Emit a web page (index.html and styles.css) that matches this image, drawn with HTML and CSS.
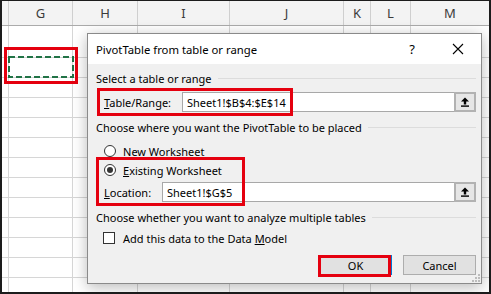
FILE: index.html
```html
<!DOCTYPE html>
<html>
<head>
<meta charset="utf-8">
<link rel="stylesheet" href="styles.css">
</head>
<body>
<div class="screen">
  <div class="canvas">
    <div class="sheet">
      <div class="hdr">
        <div class="col c0"></div>
        <div class="col cg">G</div>
        <div class="col ch">H</div>
        <div class="col ci">I</div>
        <div class="col cj">J</div>
        <div class="col ck">K</div>
        <div class="col cl">L</div>
        <div class="col cm">M</div>
      </div>
      <div class="grid">
        <div class="col c0"></div>
        <div class="col cg"></div>
        <div class="col ch"></div>
        <div class="col ci"></div>
        <div class="col cj"></div>
        <div class="col ck"></div>
        <div class="col cl"></div>
        <div class="col cm"></div>
      </div>
    </div>

    <svg class="ants" width="66" height="22" viewBox="0 0 66 22"><rect x="1" y="1" width="64" height="20" fill="none" stroke="#217346" stroke-width="2" stroke-dasharray="6 3"/></svg>
    <div class="mark mark-cell"></div>

    <div class="dialog">
      <div class="titlebar">
        <span class="title">PivotTable from table or range</span>
        <span class="tbtn help">?</span>
        <span class="tbtn close"><svg width="12" height="12" viewBox="0 0 12 12"><path d="M1 1L11 11M11 1L1 11" stroke="#000" stroke-width="1.1" fill="none"/></svg></span>
      </div>
      <div class="body">
        <div class="section"><span>Select a table or range</span><i class="rule"></i></div>
        <div class="field-row">
          <span class="label lab-range"><u>T</u>able/Range:</span>
          <span class="input">Sheet1!$B$4:$E$14</span>
          <span class="pick"><svg width="10" height="10" viewBox="0 0 10 10"><path d="M5 0.5L1 4.5H3.8V7.5H6.2V4.5H9Z" fill="#000"/><rect x="1" y="8.4" width="8" height="1.4" fill="#000"/></svg></span>
        </div>
        <div class="section s2"><span>Choose where you want the PivotTable to be placed</span><i class="rule"></i></div>
        <div class="opt r1"><span class="radio"></span><span><u>N</u>ew Worksheet</span></div>
        <div class="opt r2"><span class="radio on"></span><span><u>E</u>xisting Worksheet</span></div>
        <div class="field-row loc">
          <span class="label lab-loc"><u>L</u>ocation:</span>
          <span class="input">Sheet1!$G$5</span>
          <span class="pick"><svg width="10" height="10" viewBox="0 0 10 10"><path d="M5 0.5L1 4.5H3.8V7.5H6.2V4.5H9Z" fill="#000"/><rect x="1" y="8.4" width="8" height="1.4" fill="#000"/></svg></span>
        </div>
        <div class="section s3"><span>Choose whether you want to analyze multiple tables</span><i class="rule"></i></div>
        <div class="opt chk"><span class="checkbox"></span><span>Add this data to the Data <u>M</u>odel</span></div>
        <div class="buttons">
          <span class="btn ok">OK</span>
          <span class="btn">Cancel</span>
        </div>
      </div>
      <svg class="grip" width="8" height="8" viewBox="0 0 8 8"><g fill="#bcbcbc"><rect x="6" y="0" width="2" height="2"/><rect x="3" y="3" width="2" height="2"/><rect x="6" y="3" width="2" height="2"/><rect x="0" y="6" width="2" height="2"/><rect x="3" y="6" width="2" height="2"/><rect x="6" y="6" width="2" height="2"/></g></svg>
    </div>

    <div class="mark mark-range"></div>
    <div class="mark mark-loc"></div>
    <div class="mark mark-ok"></div>
  </div>
</div>
</body>
</html>
```
FILE: styles.css
```css
html, body {
  margin: 0;
  padding: 0;
  background: #fff;
}
.screen {
  width: 491px;
  height: 294px;
  box-sizing: border-box;
  border: 2px solid #1c1c1c;
  border-top-width: 1px;
  overflow: hidden;
}
.canvas {
  position: relative;
  width: 487px;
  height: 291px;
  font-family: "Noto Sans", "Segoe UI", sans-serif;
  color: #000;
}
.sheet {
  display: flex;
  flex-direction: column;
  height: 100%;
}
.hdr, .grid {
  display: flex;
}
.hdr {
  height: 24px;
  background: #f3f3f3;
  border-bottom: 1px solid #ababab;
  font-size: 13px;
  color: #3b3b3b;
}
.hdr .col {
  display: flex;
  align-items: center;
  justify-content: center;
  border-right: 1px solid #cfcfcf;
}
.grid {
  flex: 1;
  background:
    linear-gradient(#fff, #fff) no-repeat 0 0 / 100% 31px,
    repeating-linear-gradient(to bottom, #d6d6d6 0 1px, transparent 1px 20px) 0 31px / 100% 20px;
}
.grid .col {
  border-right: 1px solid #d6d6d6;
}
.col { box-sizing: border-box; flex: none; }
.c0 { width: 7px; }
.cg { width: 64px; }
.ch { width: 65px; }
.ci { width: 92px; }
.cj { width: 114px; }
.ck { width: 27px; }
.cl { width: 40px; }
.cm { flex: 1; border-right: none !important; }

.ants {
  position: absolute;
  left: 6px;
  top: 55px;
}
.mark {
  position: absolute;
  box-sizing: border-box;
  border: 3px solid #e5000f;
}
.mark-cell { left: 2px; top: 46px; width: 74px; height: 37px; }
.mark-range { left: 95px; top: 87px; width: 196px; height: 28px; }
.mark-loc { left: 94px; top: 156px; width: 149px; height: 49px; }
.mark-ok { left: 316px; top: 254px; width: 73px; height: 22px; }

.dialog {
  position: absolute;
  left: 85px;
  top: 32px;
  width: 395px;
  height: 251px;
  box-sizing: border-box;
  border: 1px solid #8a8a8a;
  background: #f0f0f0;
  box-shadow: 0 3px 14px rgba(0, 0, 0, 0.28);
  display: flex;
  flex-direction: column;
  font-size: 11px;
}
.titlebar {
  height: 30px;
  background: #fff;
  display: flex;
  align-items: center;
  padding-left: 8px;
  flex: none;
}
.title {
  font-size: 11.3px;
  flex: 1;
}
.tbtn {
  width: 46px;
  height: 30px;
  display: flex;
  align-items: center;
  justify-content: center;
}
.help { font-size: 13px; }
.body {
  flex: 1;
  padding: 0 5px 0 8px;
  position: relative;
}
.section {
  display: flex;
  align-items: center;
  height: 16px;
  margin-top: 6px;
  white-space: nowrap;
}
.s2, .s3 { margin-top: 7px; }
.rule {
  flex: 1;
  height: 1px;
  background: #dcdcdc;
  margin-left: 6px;
}
.field-row {
  display: flex;
  align-items: center;
  height: 20px;
  margin-top: 6px;
  padding-left: 8px;
}
.loc { margin-top: 4px; }
.label { flex: none; }
.lab-range { width: 78px; }
.lab-loc { width: 58px; }
.input {
  flex: 1;
  height: 20px;
  box-sizing: border-box;
  border: 1px solid #a8a8a8;
  border-right: none;
  background: #fff;
  padding-left: 4px;
  display: flex;
  align-items: center;
}
.pick {
  width: 22px;
  height: 20px;
  box-sizing: border-box;
  border: 2px solid #b2b2b2;
  background: #e6e6e6;
  display: flex;
  align-items: center;
  justify-content: center;
}
.opt {
  display: flex;
  align-items: center;
  height: 16px;
  gap: 7px;
  padding-left: 8px;
}
.r1 { margin-top: 8px; }
.r2 { margin-top: 3px; }
.chk { margin-top: 5px; padding-left: 7px; gap: 8px; }
.radio {
  width: 12px;
  height: 12px;
  box-sizing: border-box;
  border: 1px solid #333;
  border-radius: 50%;
  background: #fff;
  display: flex;
  align-items: center;
  justify-content: center;
}
.radio.on::after {
  content: "";
  width: 6px;
  height: 6px;
  border-radius: 50%;
  background: #333;
}
.checkbox {
  width: 12px;
  height: 12px;
  box-sizing: border-box;
  border: 1px solid #333;
  background: #fff;
}
.buttons {
  display: flex;
  justify-content: flex-end;
  gap: 11px;
  margin-top: 9px;
}
.btn {
  width: 73px;
  height: 20px;
  box-sizing: border-box;
  border: 1px solid #adadad;
  background: #e1e1e1;
  display: flex;
  align-items: center;
  justify-content: center;
}
.ok { border-color: #0078d7; }
.grip {
  position: absolute;
  right: 1px;
  bottom: 1px;
}
```
